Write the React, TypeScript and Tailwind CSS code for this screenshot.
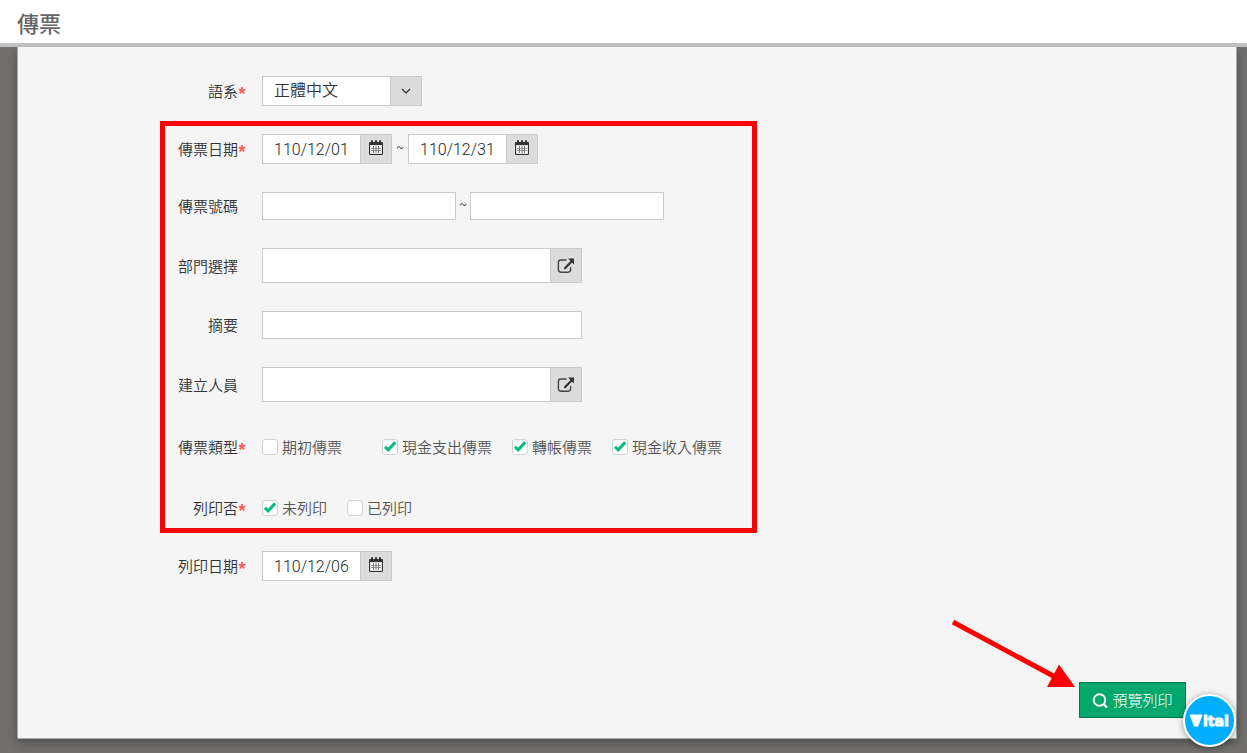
import { useState } from "react";
import type { ReactNode } from "react";

const field =
  "min-w-0 rounded-none border border-[#cacaca] bg-white px-[11px] text-[16px] text-[#333] outline-none focus:border-[#8fb8a8]";
const addon =
  "flex shrink-0 items-center justify-center border border-l-0 border-[#cacaca] bg-[#dcdcdc] text-[#333]";

function Row({
  id,
  label,
  required,
  className = "",
  children,
}: {
  id: string;
  label: string;
  required?: boolean;
  className?: string;
  children: ReactNode;
}) {
  return (
    <div className={`flex items-center gap-4 ${className}`}>
      <label
        htmlFor={id}
        className="flex w-[81px] shrink-0 items-center justify-end text-[15px] leading-5 whitespace-nowrap text-[#333]"
      >
        {label}
        <span className="h-[18px] w-2 text-center font-['Liberation_Sans'] text-[18px] leading-6 font-bold text-[#ff5a5a]">
          {required ? "*" : ""}
        </span>
      </label>
      {children}
    </div>
  );
}

function CalendarIcon() {
  return (
    <svg width="14" height="16" viewBox="0 0 14 16" aria-hidden="true" className="mb-[2px]">
      <path
        fill="#333"
        fillRule="evenodd"
        d="M1 2h1V1a1 1 0 0 1 2 0v1h2V1a1 1 0 0 1 2 0v1h2V1a1 1 0 0 1 2 0v1h1a1 1 0 0 1 1 1v11a1 1 0 0 1-1 1H1a1 1 0 0 1-1-1V3a1 1 0 0 1 1-1zM1 5v9h12V5z"
      />
      <path
        fill="#fff"
        d="M2 6h10v7H2z"
      />
      <path
        fill="#777"
        d="M4 6h1v7H4zM6.500 6h1v7h-1zM9 6h1v7H9zM2 8h10v.8H2zM2 10.300h10v.8H2z"
      />
    </svg>
  );
}

function PopupIcon() {
  return (
    <svg width="18" height="16" viewBox="0 0 18 16" aria-hidden="true">
      <path
        d="M9.500 2H4a2.600 2.600 0 0 0-2.600 2.600v7A2.600 2.600 0 0 0 4 14.200h7a2.600 2.600 0 0 0 2.600-2.600V9.200"
        fill="none"
        stroke="#444"
        strokeWidth="1.400"
      />
      <path d="M8 10.200l6.500-6.700" stroke="#333" strokeWidth="2.200" fill="none" strokeLinecap="round" />
      <path d="M11 .5h6v6z" fill="#333" />
    </svg>
  );
}

function DateField({ id, value, label }: { id: string; value: string; label: string }) {
  return (
    <div className="flex h-[30px]">
      <input
        id={id}
        aria-label={label}
        defaultValue={value}
        className="w-[99px] min-w-0 rounded-none border border-[#cacaca] bg-white pt-px pl-[11px] font-[Roboto] text-[16px] font-light text-[#222] outline-none focus:border-[#8fb8a8]"
      />
      <button type="button" aria-label="選擇日期" className={`${addon} w-[31px]`}>
        <CalendarIcon />
      </button>
    </div>
  );
}

function PickerField({ id }: { id: string }) {
  return (
    <div className="flex h-[35px] w-80">
      <input id={id} className={`${field} flex-1`} />
      <button type="button" aria-label="開啟選擇視窗" className={`${addon} w-[31px]`}>
        <PopupIcon />
      </button>
    </div>
  );
}

function Check({ id, label, checked = false }: { id: string; label: string; checked?: boolean }) {
  const [on, setOn] = useState(checked);
  return (
    <label htmlFor={id} className="flex items-center gap-1 text-[15px] leading-5 whitespace-nowrap text-[#555]">
      <span className="grid size-4 shrink-0 place-items-center">
        <input
          id={id}
          type="checkbox"
          checked={on}
          onChange={() => setOn(!on)}
          className="col-start-1 row-start-1 size-4 appearance-none rounded-[3px] border border-[#d2d2d2] bg-white"
        />
        {on && (
          <svg
            width="12"
            height="11"
            viewBox="0 0 12 11"
            aria-hidden="true"
            className="pointer-events-none col-start-1 row-start-1"
          >
            <path d="M1 5.800l3.200 3L11.200 1.300" fill="none" stroke="#00bd82" strokeWidth="3" />
          </svg>
        )}
      </span>
      {label}
    </label>
  );
}

export default function App() {
  return (
    <div className="flex min-h-screen flex-col bg-[#71706e] font-['Noto_Sans_CJK_TC','Noto_Sans_CJK_SC',sans-serif]">
      <header className="relative border-b-4 border-[#c3c4c3] bg-white px-[17px] pt-[7px] pb-[6px]">
        <h1 className="text-[22px] leading-[30px] font-medium text-[#666]">傳票</h1>
      </header>

      <main className="relative mr-[10px] mb-[14px] ml-[17px] flex flex-1 flex-col rounded-b-xs border border-t-0 border-[#aaa] bg-[#f5f5f5] pt-[29px] pb-5 shadow-[0_4px_10px_rgba(0,0,0,0.3)]">
        <form className="flex flex-1 flex-col font-[350]" onSubmit={(e) => e.preventDefault()}>
          <div className="pl-[142px]">
            <Row id="lang" label="語系" required className="h-[30px] pl-[5px]">
              <div className="grid h-[30px] w-40 grid-cols-[1fr_31px] border border-[#cacaca] bg-white">
                <select
                  id="lang"
                  className="col-span-2 col-start-1 row-start-1 h-7 appearance-none bg-transparent pr-8 pb-1 pl-[11px] text-[16px] text-[#333] outline-none"
                >
                  <option>正體中文</option>
                </select>
                <span className="pointer-events-none col-start-2 row-start-1 flex items-center justify-center border-l border-[#cacaca] bg-[#dcdcdc]">
                  <svg width="10" height="6" viewBox="0 0 10 6" aria-hidden="true">
                    <path d="M1 1l4 4 4-4" fill="none" stroke="#333" strokeWidth="1.300" />
                  </svg>
                </span>
              </div>
            </Row>

            <section className="mt-[15px] flex w-full max-w-[597px] flex-col gap-7 border-5 border-[#f00] pt-2 pb-1">
              <Row id="date-from" label="傳票日期" required>
                <div className="flex items-center">
                  <DateField id="date-from" label="傳票日期起" value="110/12/01" />
                  <span className="w-4 pb-1 text-center text-[14px] leading-5 text-[#333]">~</span>
                  <DateField id="date-to" label="傳票日期迄" value="110/12/31" />
                </div>
              </Row>
              <Row id="no-from" label="傳票號碼">
                <div className="flex items-center">
                  <input id="no-from" className={`${field} h-7 w-[194px]`} />
                  <span className="w-[14px] pb-1 text-center text-[14px] leading-5 text-[#333]">~</span>
                  <input aria-label="傳票號碼迄" className={`${field} h-7 w-[194px]`} />
                </div>
              </Row>
              <Row id="dept" label="部門選擇">
                <PickerField id="dept" />
              </Row>
              <Row id="summary" label="摘要">
                <input id="summary" className={`${field} h-7 w-80`} />
              </Row>
              <Row id="creator" label="建立人員">
                <PickerField id="creator" />
              </Row>
              <Row id="type-opening" label="傳票類型" required className="h-[33px]">
                <div className="flex items-center gap-5">
                  <div className="w-[100px]">
                    <Check id="type-opening" label="期初傳票" />
                  </div>
                  <Check id="type-out" label="現金支出傳票" checked />
                  <Check id="type-transfer" label="轉帳傳票" checked />
                  <Check id="type-in" label="現金收入傳票" checked />
                </div>
              </Row>
              <Row id="unprinted" label="列印否" required className="h-[33px]">
                <div className="flex items-center gap-5">
                  <Check id="unprinted" label="未列印" checked />
                  <Check id="printed" label="已列印" />
                </div>
              </Row>
            </section>

            <Row id="print-date" label="列印日期" required className="mt-[18px] pl-[5px]">
              <DateField id="print-date" label="列印日期" value="110/12/06" />
            </Row>
          </div>

          <div className="mt-auto flex justify-end pr-[50px]">
            <div className="relative">
              <button
                type="submit"
                className="flex h-9 w-[107px] items-center justify-center gap-1 border border-[#08794f] bg-[#04a86d] text-[15px] font-light whitespace-nowrap text-white"
              >
                <svg width="16" height="16" viewBox="0 0 16 16" aria-hidden="true">
                  <circle cx="7.500" cy="8" r="5.800" fill="none" stroke="#fff" strokeWidth="1.900" />
                  <path d="M11.500 12l3.500 3.500" stroke="#fff" strokeWidth="2.200" />
                </svg>
                預覽列印
              </button>
              <svg
                width="124"
                height="70"
                viewBox="0 0 124 70"
                aria-hidden="true"
                className="pointer-events-none absolute right-full bottom-[28px] mr-1"
              >
                <path d="M2 2l104 56" stroke="#f00" strokeWidth="5" />
                <path d="M108 44.500L124 67H96z" fill="#f00" />
              </svg>
            </div>
          </div>
        </form>

        <button
          type="button"
          aria-label="Vital"
          className="absolute right-0 bottom-[-9px] size-[53px] overflow-hidden rounded-full border-2 border-white bg-[#00aeff] shadow-[0_1px_6px_rgba(0,0,0,0.4)]"
        >
          <svg width="49" height="49" viewBox="0 0 49 49" aria-hidden="true">
            <path d="M4.500 18.500h13L11 30.500z" fill="#fff" />
            <g
              fill="#fff"
              stroke="#fff"
              strokeWidth="1"
              fontFamily="'DejaVu Sans', sans-serif"
              fontWeight="700"
              fontSize="14"
            >
              <text y="30">
                <tspan x="5.500">V</tspan>
                <tspan x="18">ital</tspan>
              </text>
            </g>
          </svg>
        </button>
      </main>
    </div>
  );
}
